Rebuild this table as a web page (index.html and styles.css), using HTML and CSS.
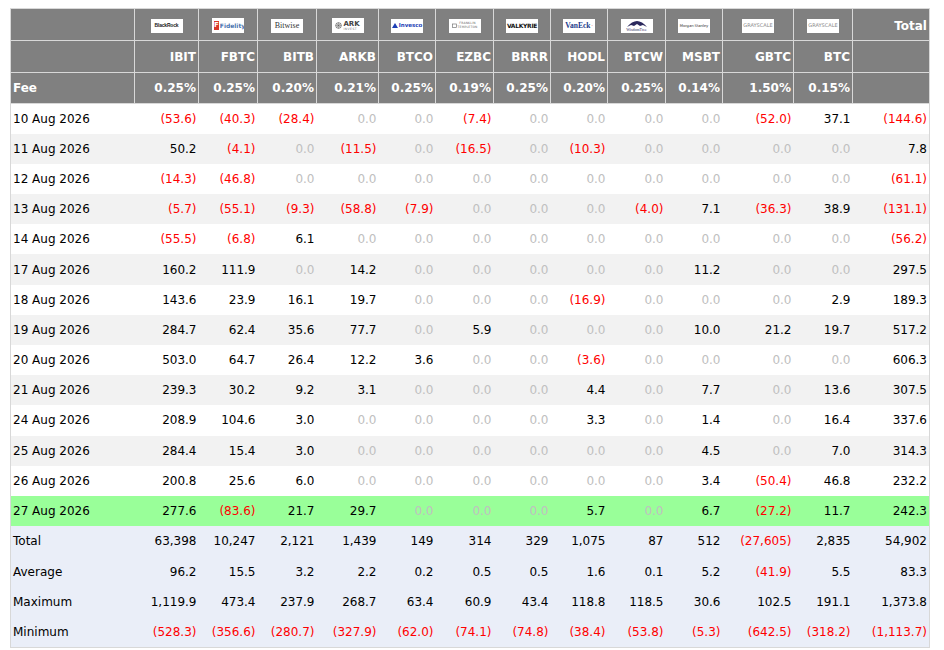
FILE: index.html
```html
<!DOCTYPE html>
<html>
<head>
<meta charset="utf-8">
<link rel="stylesheet" href="styles.css">
</head>
<body>
<table class="flows">
<colgroup>
<col class="c-date"><col class="c-ibit"><col class="c-fbtc"><col class="c-bitb"><col class="c-arkb"><col class="c-btco"><col class="c-ezbc"><col class="c-brrr"><col class="c-hodl"><col class="c-btcw"><col class="c-msbt"><col class="c-gbtc"><col class="c-btc"><col class="c-total">
</colgroup>
<thead>
<tr class="h-logo">
<th></th>
<th><span class="logo lg-br">BlackRock</span></th>
<th><span class="logo lg-fid"><span class="fid-f">F</span><span class="fid-t">Fidelity</span></span></th>
<th><span class="logo lg-bw">Bitwise</span></th>
<th><span class="logo lg-ark"><svg width="7" height="7" viewBox="0 0 10 10"><circle cx="5" cy="5" r="4" fill="none" stroke="#555" stroke-width="1"/><path d="M5 1V9M1 5H9M2.2 2.2L7.8 7.8M7.8 2.2L2.2 7.8" stroke="#555" stroke-width="0.7"/></svg><span class="ark-t"><span class="ark-a">ARK</span><span class="ark-b">INVEST</span></span></span></th>
<th><span class="logo lg-inv"><svg width="6" height="5" viewBox="0 0 6 5"><path d="M0 5L3 0L6 5Z" fill="#1d3fb5"/></svg>Invesco</span></th>
<th><span class="logo lg-fr"><svg width="5" height="5" viewBox="0 0 5 5"><rect x="0.5" y="1" width="4" height="3.5" fill="none" stroke="#777" stroke-width="0.7"/></svg><span class="fr-t">FRANKLIN<br>TEMPLETON</span></span></th>
<th><span class="logo lg-val">VALKYRIE</span></th>
<th><span class="logo lg-ve">VanEck<sup>·</sup></span></th>
<th><span class="logo lg-wt"><svg width="22" height="8" viewBox="0 0 22 8"><path d="M1 7C4 3 8 1 11 1C14 1 18 3 21 7L17 5L14 6L11 4L8 6L5 5Z" fill="#2c2a5e"/></svg><span class="wt-t">WisdomTree</span></span></th>
<th><span class="logo lg-ms">Morgan Stanley</span></th>
<th><span class="logo lg-gs">GRAYSCALE</span></th>
<th><span class="logo lg-gs">GRAYSCALE</span></th>
<th class="r">Total</th>
</tr>
<tr class="h-tick">
<th></th><th>IBIT</th><th>FBTC</th><th>BITB</th><th>ARKB</th><th>BTCO</th><th>EZBC</th><th>BRRR</th><th>HODL</th><th>BTCW</th><th>MSBT</th><th>GBTC</th><th>BTC</th><th></th>
</tr>
<tr class="h-fee">
<th class="l">Fee</th><th>0.25%</th><th>0.25%</th><th>0.20%</th><th>0.21%</th><th>0.25%</th><th>0.19%</th><th>0.25%</th><th>0.20%</th><th>0.25%</th><th>0.14%</th><th>1.50%</th><th>0.15%</th><th></th>
</tr>
</thead>
<tbody>
<tr class="day"><td>10 Aug 2026</td><td class="neg">(53.6)</td><td class="neg">(40.3)</td><td class="neg">(28.4)</td><td class="z">0.0</td><td class="z">0.0</td><td class="neg">(7.4)</td><td class="z">0.0</td><td class="z">0.0</td><td class="z">0.0</td><td class="z">0.0</td><td class="neg">(52.0)</td><td>37.1</td><td class="neg">(144.6)</td></tr>
<tr class="day alt"><td>11 Aug 2026</td><td>50.2</td><td class="neg">(4.1)</td><td class="z">0.0</td><td class="neg">(11.5)</td><td class="z">0.0</td><td class="neg">(16.5)</td><td class="z">0.0</td><td class="neg">(10.3)</td><td class="z">0.0</td><td class="z">0.0</td><td class="z">0.0</td><td class="z">0.0</td><td>7.8</td></tr>
<tr class="day"><td>12 Aug 2026</td><td class="neg">(14.3)</td><td class="neg">(46.8)</td><td class="z">0.0</td><td class="z">0.0</td><td class="z">0.0</td><td class="z">0.0</td><td class="z">0.0</td><td class="z">0.0</td><td class="z">0.0</td><td class="z">0.0</td><td class="z">0.0</td><td class="z">0.0</td><td class="neg">(61.1)</td></tr>
<tr class="day alt"><td>13 Aug 2026</td><td class="neg">(5.7)</td><td class="neg">(55.1)</td><td class="neg">(9.3)</td><td class="neg">(58.8)</td><td class="neg">(7.9)</td><td class="z">0.0</td><td class="z">0.0</td><td class="z">0.0</td><td class="neg">(4.0)</td><td>7.1</td><td class="neg">(36.3)</td><td>38.9</td><td class="neg">(131.1)</td></tr>
<tr class="day"><td>14 Aug 2026</td><td class="neg">(55.5)</td><td class="neg">(6.8)</td><td>6.1</td><td class="z">0.0</td><td class="z">0.0</td><td class="z">0.0</td><td class="z">0.0</td><td class="z">0.0</td><td class="z">0.0</td><td class="z">0.0</td><td class="z">0.0</td><td class="z">0.0</td><td class="neg">(56.2)</td></tr>
<tr class="day alt"><td>17 Aug 2026</td><td>160.2</td><td>111.9</td><td class="z">0.0</td><td>14.2</td><td class="z">0.0</td><td class="z">0.0</td><td class="z">0.0</td><td class="z">0.0</td><td class="z">0.0</td><td>11.2</td><td class="z">0.0</td><td class="z">0.0</td><td>297.5</td></tr>
<tr class="day"><td>18 Aug 2026</td><td>143.6</td><td>23.9</td><td>16.1</td><td>19.7</td><td class="z">0.0</td><td class="z">0.0</td><td class="z">0.0</td><td class="neg">(16.9)</td><td class="z">0.0</td><td class="z">0.0</td><td class="z">0.0</td><td>2.9</td><td>189.3</td></tr>
<tr class="day alt"><td>19 Aug 2026</td><td>284.7</td><td>62.4</td><td>35.6</td><td>77.7</td><td class="z">0.0</td><td>5.9</td><td class="z">0.0</td><td class="z">0.0</td><td class="z">0.0</td><td>10.0</td><td>21.2</td><td>19.7</td><td>517.2</td></tr>
<tr class="day"><td>20 Aug 2026</td><td>503.0</td><td>64.7</td><td>26.4</td><td>12.2</td><td>3.6</td><td class="z">0.0</td><td class="z">0.0</td><td class="neg">(3.6)</td><td class="z">0.0</td><td class="z">0.0</td><td class="z">0.0</td><td class="z">0.0</td><td>606.3</td></tr>
<tr class="day alt"><td>21 Aug 2026</td><td>239.3</td><td>30.2</td><td>9.2</td><td>3.1</td><td class="z">0.0</td><td class="z">0.0</td><td class="z">0.0</td><td>4.4</td><td class="z">0.0</td><td>7.7</td><td class="z">0.0</td><td>13.6</td><td>307.5</td></tr>
<tr class="day"><td>24 Aug 2026</td><td>208.9</td><td>104.6</td><td>3.0</td><td class="z">0.0</td><td class="z">0.0</td><td class="z">0.0</td><td class="z">0.0</td><td>3.3</td><td class="z">0.0</td><td>1.4</td><td class="z">0.0</td><td>16.4</td><td>337.6</td></tr>
<tr class="day alt"><td>25 Aug 2026</td><td>284.4</td><td>15.4</td><td>3.0</td><td class="z">0.0</td><td class="z">0.0</td><td class="z">0.0</td><td class="z">0.0</td><td class="z">0.0</td><td class="z">0.0</td><td>4.5</td><td class="z">0.0</td><td>7.0</td><td>314.3</td></tr>
<tr class="day"><td>26 Aug 2026</td><td>200.8</td><td>25.6</td><td>6.0</td><td class="z">0.0</td><td class="z">0.0</td><td class="z">0.0</td><td class="z">0.0</td><td class="z">0.0</td><td class="z">0.0</td><td>3.4</td><td class="neg">(50.4)</td><td>46.8</td><td>232.2</td></tr>
<tr class="day latest"><td>27 Aug 2026</td><td>277.6</td><td class="neg">(83.6)</td><td>21.7</td><td>29.7</td><td class="z">0.0</td><td class="z">0.0</td><td class="z">0.0</td><td>5.7</td><td class="z">0.0</td><td>6.7</td><td class="neg">(27.2)</td><td>11.7</td><td>242.3</td></tr>
</tbody>
<tfoot>
<tr class="sum"><td>Total</td><td>63,398</td><td>10,247</td><td>2,121</td><td>1,439</td><td>149</td><td>314</td><td>329</td><td>1,075</td><td>87</td><td>512</td><td class="neg">(27,605)</td><td>2,835</td><td>54,902</td></tr>
<tr class="sum"><td>Average</td><td>96.2</td><td>15.5</td><td>3.2</td><td>2.2</td><td>0.2</td><td>0.5</td><td>0.5</td><td>1.6</td><td>0.1</td><td>5.2</td><td class="neg">(41.9)</td><td>5.5</td><td>83.3</td></tr>
<tr class="sum"><td>Maximum</td><td>1,119.9</td><td>473.4</td><td>237.9</td><td>268.7</td><td>63.4</td><td>60.9</td><td>43.4</td><td>118.8</td><td>118.5</td><td>30.6</td><td>102.5</td><td>191.1</td><td>1,373.8</td></tr>
<tr class="sum"><td>Minimum</td><td class="neg">(528.3)</td><td class="neg">(356.6)</td><td class="neg">(280.7)</td><td class="neg">(327.9)</td><td class="neg">(62.0)</td><td class="neg">(74.1)</td><td class="neg">(74.8)</td><td class="neg">(38.4)</td><td class="neg">(53.8)</td><td class="neg">(5.3)</td><td class="neg">(642.5)</td><td class="neg">(318.2)</td><td class="neg">(1,113.7)</td></tr>
</tfoot>
</table>
</body>
</html>
```
FILE: styles.css
```css
html, body {
  margin: 0;
  padding: 0;
  background: #ffffff;
}
body {
  padding: 8px 0 0 10px;
  font-family: "DejaVu Sans", "Liberation Sans", sans-serif;
  font-size: 12px;
  color: #000;
}
.flows {
  border-collapse: collapse;
  table-layout: fixed;
  width: 920px;
  border: 1px solid #d8d8d8;
}
.c-date { width: 124px; }
.c-ibit { width: 64px; }
.c-fbtc { width: 59px; }
.c-bitb { width: 59px; }
.c-arkb { width: 62px; }
.c-btco { width: 57px; }
.c-ezbc { width: 58px; }
.c-brrr { width: 57px; }
.c-hodl { width: 57px; }
.c-btcw { width: 58px; }
.c-msbt { width: 57px; }
.c-gbtc { width: 71px; }
.c-btc { width: 59px; }
.c-total { width: 77px; }

.flows th {
  background: #808080;
  color: #fff;
  font-weight: bold;
  font-size: 12px;
  border: 1px solid #d8d8d8;
  padding: 0 2px;
  text-align: right;
  white-space: nowrap;
  overflow: hidden;
}
.flows th.l { text-align: left; }
.h-logo { height: 32px; }
.h-logo th { text-align: center; padding-top: 2px; }
.h-logo th.r { text-align: right; }
.h-tick { height: 32px; }
.h-fee { height: 31px; }

.flows td {
  padding: 0 2px;
  text-align: right;
  white-space: nowrap;
  overflow: hidden;
}
.flows td:first-child { text-align: left; }
.day { height: 30.2px; background: #ffffff; }
.day.alt { background: #f2f2f2; }
.day.latest { background: #99ff99; }
.sum { height: 30.25px; background: #eaeef8; }
.neg { color: #ff0000; }
.z { color: #c0c0c0; }

/* logos */
.logo {
  display: inline-flex;
  align-items: center;
  justify-content: center;
  width: 32px;
  height: 14px;
  background: #fff;
  color: #222;
  font-weight: bold;
  font-size: 5px;
  line-height: 1;
  vertical-align: middle;
  overflow: hidden;
  gap: 1px;
}
.lg-br { font-family: "Liberation Sans", sans-serif; letter-spacing: -0.2px; }
.lg-fid { height: 15px; justify-content: flex-start; padding-left: 2px; box-sizing: border-box; }
.fid-f {
  display: inline-flex;
  align-items: center;
  justify-content: center;
  width: 7px;
  height: 9px;
  background: #d9372b;
  color: #fff;
  font-size: 7px;
}
.fid-t { color: #4a74b0; font-size: 6px; }
.lg-bw { font-family: "Liberation Serif", serif; font-weight: normal; font-size: 8px; color: #333; }
.lg-ark { height: 15px; }
.ark-t { display: flex; flex-direction: column; align-items: flex-start; }
.ark-a { font-size: 7px; color: #444; }
.ark-b { font-size: 3px; color: #777; letter-spacing: 0.5px; font-weight: normal; }
.lg-inv { color: #1d3fb5; font-size: 5.5px; }
.lg-fr { color: #666; font-weight: normal; }
.fr-t { font-size: 3px; line-height: 1.1; letter-spacing: 0.2px; }
.lg-val { font-size: 6px; color: #111; letter-spacing: -0.3px; }
.lg-ve { font-family: "Liberation Serif", serif; color: #1d3a8a; font-size: 7.5px; }
.lg-ve sup { font-size: 4px; color: #c00; }
.lg-wt { flex-direction: column; gap: 0; }
.wt-t { font-family: "Liberation Serif", serif; font-weight: normal; font-size: 4px; color: #2c2a5e; }
.lg-ms { font-weight: normal; font-size: 3.8px; color: #333; letter-spacing: -0.1px; }
.lg-gs { font-weight: normal; font-size: 5px; color: #888; }
```
